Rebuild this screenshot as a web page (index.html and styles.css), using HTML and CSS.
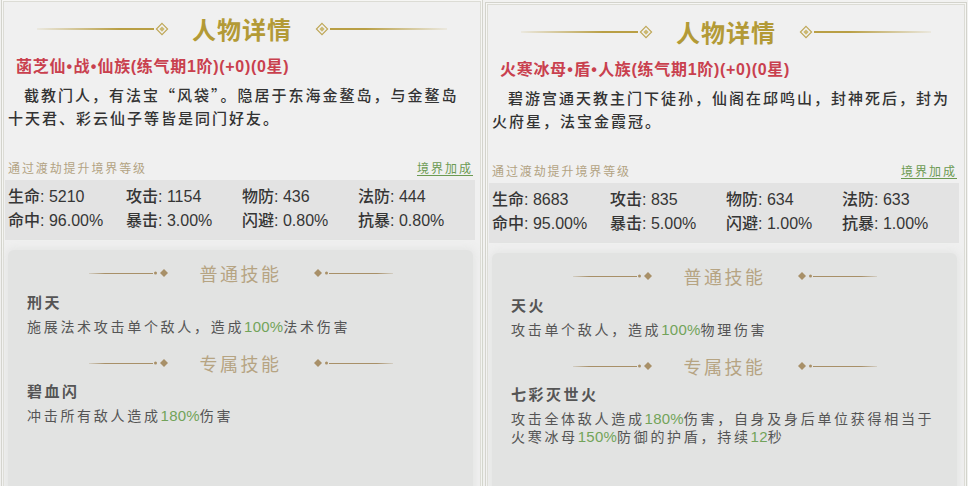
FILE: index.html
```html
<!DOCTYPE html>
<html lang="zh-CN">
<head>
<meta charset="utf-8">
<title>人物详情</title>
<link rel="stylesheet" href="styles.css">
</head>
<body>
<div class="page">
  <section class="panel panel-a">
    <header class="title-row">
      <span class="tline tline-l"></span>
      <svg class="ring" viewBox="0 0 16 16"><path d="M8 1.6 L14.4 8 L8 14.4 L1.6 8 Z" fill="none" stroke="#bea655" stroke-width="1.3"/><path d="M8 5 L11 8 L8 11 L5 8 Z" fill="#cbb870"/></svg>
      <h1 class="title">人物详情</h1>
      <svg class="ring" viewBox="0 0 16 16"><path d="M8 1.6 L14.4 8 L8 14.4 L1.6 8 Z" fill="none" stroke="#bea655" stroke-width="1.3"/><path d="M8 5 L11 8 L8 11 L5 8 Z" fill="#cbb870"/></svg>
      <span class="tline tline-r"></span>
    </header>
    <div class="name">菡芝仙<span class="dot">•</span>战<span class="dot">•</span>仙族(练气期1阶)(+0)(0星)</div>
    <p class="desc">截教门人，有法宝“风袋”。隐居于东海金鳌岛，与金鳌岛十天君、彩云仙子等皆是同门好友。</p>
    <div class="hint-row">
      <span class="hint">通过渡劫提升境界等级</span>
      <a class="bonus">境界加成</a>
    </div>
    <div class="stats">
      <span>生命: 5210</span><span>攻击: 1154</span><span>物防: 436</span><span>法防: 444</span>
      <span>命中: 96.00%</span><span>暴击: 3.00%</span><span>闪避: 0.80%</span><span>抗暴: 0.80%</span>
    </div>
    <div class="skills">
      <div class="sk-head">
        <span class="sline sline-l"></span>
        <svg class="orn" viewBox="0 0 16 10"><circle cx="2.5" cy="5" r="1.5" fill="#a89068"/><path d="M11 1 L15 5 L11 9 L7 5 Z" fill="#a89068"/></svg>
        <span class="sk-title">普通技能</span>
        <svg class="orn" viewBox="0 0 16 10"><path d="M5 1 L9 5 L5 9 L1 5 Z" fill="#a89068"/><circle cx="13.5" cy="5" r="1.5" fill="#a89068"/></svg>
        <span class="sline sline-r"></span>
      </div>
      <div class="sk-name">刑天</div>
      <p class="sk-desc">施展法术攻击单个敌人，造成<span class="pct">100%</span>法术伤害</p>
      <div class="sk-head sk-head-2">
        <span class="sline sline-l"></span>
        <svg class="orn" viewBox="0 0 16 10"><circle cx="2.5" cy="5" r="1.5" fill="#a89068"/><path d="M11 1 L15 5 L11 9 L7 5 Z" fill="#a89068"/></svg>
        <span class="sk-title">专属技能</span>
        <svg class="orn" viewBox="0 0 16 10"><path d="M5 1 L9 5 L5 9 L1 5 Z" fill="#a89068"/><circle cx="13.5" cy="5" r="1.5" fill="#a89068"/></svg>
        <span class="sline sline-r"></span>
      </div>
      <div class="sk-name sk-name-2">碧血闪</div>
      <p class="sk-desc">冲击所有敌人造成<span class="pct">180%</span>伤害</p>
    </div>
  </section>

  <section class="panel panel-b">
    <header class="title-row">
      <span class="tline tline-l"></span>
      <svg class="ring" viewBox="0 0 16 16"><path d="M8 1.6 L14.4 8 L8 14.4 L1.6 8 Z" fill="none" stroke="#bea655" stroke-width="1.3"/><path d="M8 5 L11 8 L8 11 L5 8 Z" fill="#cbb870"/></svg>
      <h1 class="title">人物详情</h1>
      <svg class="ring" viewBox="0 0 16 16"><path d="M8 1.6 L14.4 8 L8 14.4 L1.6 8 Z" fill="none" stroke="#bea655" stroke-width="1.3"/><path d="M8 5 L11 8 L8 11 L5 8 Z" fill="#cbb870"/></svg>
      <span class="tline tline-r"></span>
    </header>
    <div class="name">火寒冰母<span class="dot">•</span>盾<span class="dot">•</span>人族(练气期1阶)(+0)(0星)</div>
    <p class="desc">碧游宫通天教主门下徒孙，仙阁在邱鸣山，封神死后，封为火府星，法宝金霞冠。</p>
    <div class="hint-row">
      <span class="hint">通过渡劫提升境界等级</span>
      <a class="bonus">境界加成</a>
    </div>
    <div class="stats">
      <span>生命: 8683</span><span>攻击: 835</span><span>物防: 634</span><span>法防: 633</span>
      <span>命中: 95.00%</span><span>暴击: 5.00%</span><span>闪避: 1.00%</span><span>抗暴: 1.00%</span>
    </div>
    <div class="skills">
      <div class="sk-head">
        <span class="sline sline-l"></span>
        <svg class="orn" viewBox="0 0 16 10"><circle cx="2.5" cy="5" r="1.5" fill="#a89068"/><path d="M11 1 L15 5 L11 9 L7 5 Z" fill="#a89068"/></svg>
        <span class="sk-title">普通技能</span>
        <svg class="orn" viewBox="0 0 16 10"><path d="M5 1 L9 5 L5 9 L1 5 Z" fill="#a89068"/><circle cx="13.5" cy="5" r="1.5" fill="#a89068"/></svg>
        <span class="sline sline-r"></span>
      </div>
      <div class="sk-name">天火</div>
      <p class="sk-desc">攻击单个敌人，造成<span class="pct">100%</span>物理伤害</p>
      <div class="sk-head sk-head-2">
        <span class="sline sline-l"></span>
        <svg class="orn" viewBox="0 0 16 10"><circle cx="2.5" cy="5" r="1.5" fill="#a89068"/><path d="M11 1 L15 5 L11 9 L7 5 Z" fill="#a89068"/></svg>
        <span class="sk-title">专属技能</span>
        <svg class="orn" viewBox="0 0 16 10"><path d="M5 1 L9 5 L5 9 L1 5 Z" fill="#a89068"/><circle cx="13.5" cy="5" r="1.5" fill="#a89068"/></svg>
        <span class="sline sline-r"></span>
      </div>
      <div class="sk-name sk-name-2">七彩灭世火</div>
      <p class="sk-desc">攻击全体敌人造成<span class="pct">180%</span>伤害，自身及身后单位获得相当于<br>火寒冰母<span class="pct">150%</span>防御的护盾，持续<span class="pct">12</span>秒</p>
    </div>
  </section>
</div>
</body>
</html>
```

FILE: styles.css
```css
* { box-sizing: border-box; margin: 0; padding: 0; }

html, body { background: #f2f2f1; }

body {
  width: 968px;
  height: 486px;
  overflow: hidden;
  font-family: "Noto Sans CJK SC", "Liberation Sans", sans-serif;
  color: #333;
}

.page {
  display: flex;
  align-items: flex-start;
  gap: 2px;
  padding-left: 1px;
}

.panel {
  width: 482px;
  height: 500px;
  padding: 15px 6px 0;
  background: #f0f0f0;
  border: 1px solid #d3d3cc;
  box-shadow: inset 0 0 0 1px #f6f6f4, inset 0 0 0 2px #dcdcd5;
}

.panel-a { margin-top: -1px; }
.panel-b { margin-top: 2px; }

/* title */
.title-row {
  display: flex;
  align-items: center;
  justify-content: center;
  height: 28px;
}

.tline {
  width: 117px;
  height: 2px;
}
.tline-l { background: linear-gradient(to right, rgba(190, 165, 80, 0.1), #b99f45 70%); }
.tline-r { background: linear-gradient(to left, rgba(190, 165, 80, 0.1), #b99f45 70%); }

.ring { width: 14px; height: 14px; margin: 0 1px; }

.title {
  margin: 0 22px;
  font-size: 24px;
  line-height: 28px;
  font-weight: 700;
  letter-spacing: 1px;
  color: #b39a36;
}

/* name + description */
.name {
  margin: 14px 0 0 8px;
  font-family: "Liberation Sans", "Noto Sans CJK SC", sans-serif;
  font-size: 16px;
  line-height: 20px;
  font-weight: 700;
  letter-spacing: 0.7px;
  color: #c9404e;
}

.dot {
  margin: 0 0.5px;
}

.desc {
  width: 462px;
  margin-top: 6px;
  font-size: 15px;
  line-height: 23px;
  letter-spacing: 2px;
  text-indent: 16px;
  color: #333;
  font-weight: 500;
}

/* hint row */
.hint-row {
  display: flex;
  justify-content: space-between;
  align-items: center;
  margin-top: 31px;
  padding-right: 3px;
  height: 16px;
}

.hint {
  font-size: 12px;
  line-height: 16px;
  letter-spacing: 1.9px;
  color: #b3a383;
}

.bonus {
  font-size: 12px;
  line-height: 16px;
  letter-spacing: 2px;
  color: #6c9a52;
  text-decoration: underline;
  text-underline-offset: 2px;
}

/* stats */
.stats {
  display: grid;
  grid-template-columns: 118px 116px 116px 1fr;
  margin: 4px 1px 0 -3px;
  padding: 5px 3px 7px;
  background: #e3e3e3;
  font-family: "Liberation Sans", "Noto Sans CJK SC", sans-serif;
  font-size: 16px;
  line-height: 24px;
  color: #363636;
  font-weight: 500;
}

/* skills */
.skills {
  height: 260px;
  margin: 10px 3px 0 0;
  padding: 11px 15px 0 19px;
  background: #e2e3e2;
  border-radius: 6px;
  box-shadow: 0 0 8px 2px rgba(226, 227, 226, 0.9);
}

.sk-head {
  display: flex;
  align-items: center;
  justify-content: center;
  height: 24px;
  margin-left: -4px;
}

.sk-head-2 { margin-top: 15px; }

.sline { width: 64px; height: 1px; }
.sline-l { background: linear-gradient(to right, rgba(168, 144, 104, 0.25), #a89068 25%); }
.sline-r { background: linear-gradient(to left, rgba(168, 144, 104, 0.25), #a89068 25%); }

.orn { width: 16px; height: 10px; }

.sk-title {
  margin: 0 31px;
  font-size: 18px;
  line-height: 24px;
  letter-spacing: 2.5px;
  color: #b6a482;
}

.sk-name {
  margin-top: 6px;
  font-size: 15px;
  line-height: 22px;
  font-weight: 700;
  letter-spacing: 2.5px;
  color: #555;
}

.sk-name-2 { margin-top: 5px; }

.sk-desc {
  margin-top: 5px;
  font-family: "Liberation Sans", "Noto Sans CJK SC", sans-serif;
  font-size: 14px;
  line-height: 17px;
  letter-spacing: 2.7px;
  color: #555;
}

.pct {
  font-size: 15px;
  letter-spacing: 0.2px;
  color: #72a35a;
}
```
